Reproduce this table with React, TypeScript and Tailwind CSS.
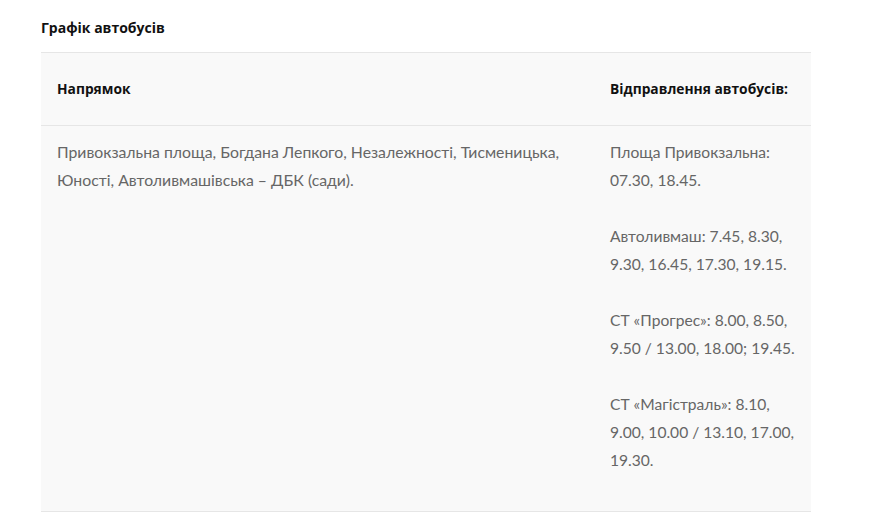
const STOPS = [
  ["Площа Привокзальна:", "07.30, 18.45."],
  ["Автоливмаш: 7.45, 8.30,", "9.30, 16.45, 17.30, 19.15."],
  ["СТ «Прогрес»: 8.00, 8.50,", "9.50 / 13.00, 18.00; 19.45."],
  ["СТ «Магістраль»: 8.10,", "9.00, 10.00 / 13.10, 17.00,", "19.30."],
];

export default function App() {
  return (
    <main className="min-h-screen bg-white px-[41px] pt-[18px]">
      <h2 className="font-['Open_Sans',sans-serif] text-[14px] font-bold leading-[20px] text-[#111]">
        Графік автобусів
      </h2>
      <table className="mt-[14px] w-[770px] border-collapse bg-[#f9f9f9]">
        <thead>
          <tr className="border-y border-[#e6e6e6]">
            <th className="w-[553px] px-4 py-6 text-left align-middle font-['Open_Sans',sans-serif] text-[13.8px] font-bold leading-[24px] text-[#111]">
              Напрямок
            </th>
            <th className="px-4 py-6 text-left align-middle font-['Open_Sans',sans-serif] text-[13.8px] font-bold leading-[24px] text-[#111]">
              Відправлення автобусів:
            </th>
          </tr>
        </thead>
        <tbody>
          <tr className="border-b border-[#e6e6e6] align-top font-['Lato',sans-serif] text-[15.6px] leading-[28px] text-[#666]">
            <td className="px-4 pb-[9px] pt-[12px] text-[15.8px]">
              Привокзальна площа, Богдана Лепкого, Незалежності, Тисменицька,
              <br />
              Юності, Автоливмашівська – ДБК (сади).
            </td>
            <td className="whitespace-nowrap px-4 pb-[9px] pt-[12px]">
              {STOPS.map((lines, i) => (
                <p key={i} className="mb-7">
                  {lines.map((l, j) => (
                    <span key={j}>
                      {l}
                      {j < lines.length - 1 && <br />}
                    </span>
                  ))}
                </p>
              ))}
            </td>
          </tr>
        </tbody>
      </table>
    </main>
  );
}
